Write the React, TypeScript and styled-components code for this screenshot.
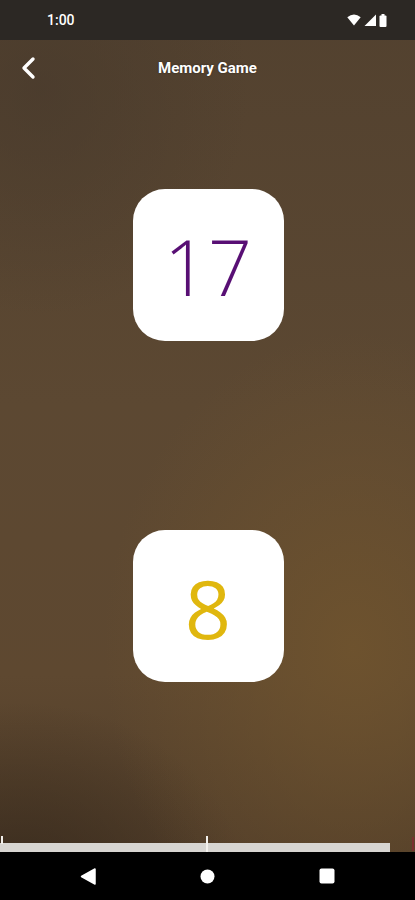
import React from "react";
import styled, { createGlobalStyle } from "styled-components";

const Global = createGlobalStyle`
  html, body { margin: 0; padding: 0; background: #000; }
  body { font-family: Roboto, "Noto Sans", sans-serif; }
`;

const Screen = styled.div`
  width: 415px;
  height: 900px;
  display: flex;
  flex-direction: column;
  overflow: hidden;
  background:
    radial-gradient(ellipse 60% 35% at 85% 72%, rgba(112, 84, 46, 0.85), rgba(112, 84, 46, 0) 100%),
    radial-gradient(ellipse 55% 22% at 5% 100%, rgba(50, 38, 26, 0.8), rgba(50, 38, 26, 0) 100%),
    radial-gradient(ellipse 50% 25% at 10% 10%, rgba(72, 58, 44, 0.7), rgba(72, 58, 44, 0) 100%),
    linear-gradient(180deg, #52412f 0%, #5c4832 45%, #5e4830 75%, #4e3b28 100%);
`;

const StatusBar = styled.div`
  height: 40px;
  flex: none;
  background: #2c2824;
  display: flex;
  align-items: center;
  padding: 0 28px 0 47px;
  color: #fff;
`;

const Clock = styled.span`
  font-size: 14px;
  font-weight: 500;
  flex: 1;
`;

const StatusIcons = styled.div`
  display: flex;
  align-items: center;
  gap: 3px;
`;

const Header = styled.div`
  height: 56px;
  flex: none;
  display: grid;
  grid-template-columns: 56px 1fr 56px;
  align-items: center;
`;

const BackButton = styled.div`
  display: flex;
  align-items: center;
  justify-content: flex-start;
  padding-left: 20px;
`;

const Title = styled.h1`
  margin: 0;
  text-align: center;
  color: #fff;
  font-size: 15px;
  font-weight: 700;
  text-shadow: 0 0 2px rgba(0, 0, 0, 0.4);
`;

const Content = styled.div`
  flex: 1;
  display: flex;
  flex-direction: column;
  align-items: center;
  padding-top: 93px;
  gap: 189px;
`;

const Card = styled.div`
  width: 151px;
  height: 152px;
  margin-left: 1px;
  background: #fff;
  border-radius: 32px;
  display: flex;
  align-items: center;
  justify-content: center;
`;

const Number = styled.span<{ $color: string; $weight: number; $size: number }>`
  font-family: "Open Sans", sans-serif;
  font-size: ${(p) => p.$size}px;
  line-height: 1;
  font-weight: ${(p) => p.$weight};
  color: ${(p) => p.$color};
  margin-top: 2px;
`;

const Progress = styled.div`
  position: relative;
  height: 9px;
  flex: none;
  display: flex;
`;

const Fill = styled.div`
  width: 390px;
  height: 100%;
  background: #d7d5d1;
`;

const EndMark = styled.div`
  margin-left: auto;
  margin-right: 1px;
  width: 2px;
  height: 14px;
  margin-top: -6px;
  background: #7a3030;
`;

const Tick = styled.div<{ $left: number; $height: number }>`
  position: absolute;
  left: ${(p) => p.$left}px;
  top: -7px;
  width: 2px;
  height: ${(p) => p.$height}px;
  background: #f2f0ec;
`;

const NavBar = styled.div`
  height: 48px;
  flex: none;
  background: #000;
  display: grid;
  grid-template-columns: repeat(3, 1fr);
  align-items: center;
  justify-items: center;
  padding: 0 28px;
`;

export default function App() {
  return (
    <>
      <Global />
      <Screen>
        <StatusBar>
          <Clock>1:00</Clock>
          <StatusIcons>
            <svg width="14" height="12" viewBox="0 0 14 12">
              <path d="M7 11.5 L0.3 3.2 Q7 -2.2 13.7 3.2 Z" fill="#fff" />
            </svg>
            <svg width="12" height="12" viewBox="0 0 12 12">
              <path d="M12 0.5 L12 12 L0.5 12 Z" fill="#fff" />
            </svg>
            <svg width="8" height="13" viewBox="0 0 8 13">
              <rect x="2.5" y="0" width="3" height="2" fill="#fff" />
              <rect x="0.5" y="1.5" width="7" height="11.5" rx="1" fill="#fff" />
            </svg>
          </StatusIcons>
        </StatusBar>
        <Header>
          <BackButton>
            <svg width="18" height="24" viewBox="0 0 18 24">
              <path
                d="M13 3 L4 12 L13 21"
                fill="none"
                stroke="#fff"
                strokeWidth="3.4"
                strokeLinecap="round"
                strokeLinejoin="round"
              />
            </svg>
          </BackButton>
          <Title>Memory Game</Title>
          <div />
        </Header>
        <Content>
          <Card>
            <Number $color="#580f74" $weight={300} $size={77}>17</Number>
          </Card>
          <Card>
            <Number $color="#e0b70e" $weight={500} $size={81}>8</Number>
          </Card>
        </Content>
        <Progress>
          <Fill />
          <EndMark />
          <Tick $left={1} $height={8} />
          <Tick $left={206} $height={16} />
        </Progress>
        <NavBar>
          <svg width="16" height="17" viewBox="0 0 16 17">
            <path d="M15 1 L15 16 L1.5 8.5 Z" fill="#fff" stroke="#fff" strokeWidth="1.5" strokeLinejoin="round" />
          </svg>
          <svg width="15" height="15" viewBox="0 0 15 15">
            <circle cx="7.5" cy="7.5" r="7" fill="#fff" />
          </svg>
          <svg width="16" height="16" viewBox="0 0 16 16">
            <rect x="0.5" y="0.5" width="15" height="15" rx="2" fill="#fff" />
          </svg>
        </NavBar>
      </Screen>
    </>
  );
}
